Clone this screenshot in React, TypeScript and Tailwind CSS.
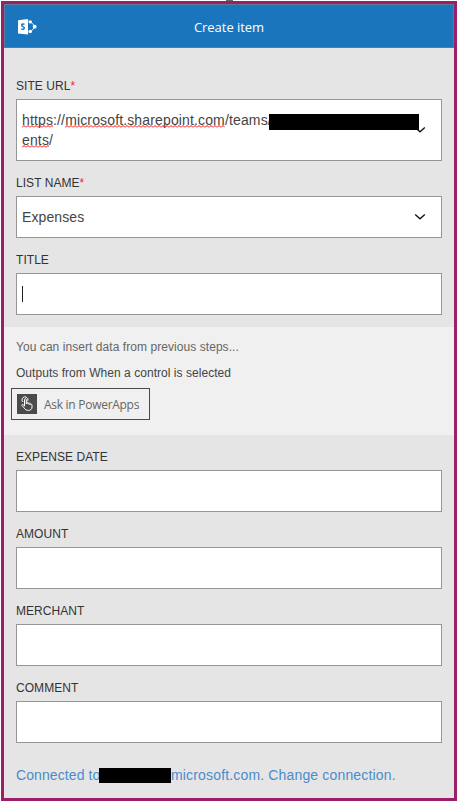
import React from "react";

const sans = "font-['Liberation_Sans',Arial,sans-serif]";
const segoe = "font-['Open_Sans','Noto_Sans',sans-serif]";

function SharePointIcon() {
  return (
    <svg width="21" height="18" viewBox="0 0 21 18" fill="none">
      <path d="M11.5 3.2L13.6 3.6L17.6 8M17.6 9.4L13.6 13.8H11.5" stroke="#fff" strokeWidth="0.9" />
      <path d="M1 2.2L11 0.9V16.6L1 15.4Z" fill="#fff" />
      <circle cx="13.3" cy="3.9" r="1.7" fill="#fff" />
      <circle cx="17.7" cy="8.7" r="1.9" fill="#fff" />
      <circle cx="13.3" cy="13.5" r="1.7" fill="#fff" />
      <path
        d="M7.5 6.4C6.7 5.9 4.7 5.7 4.7 7.2C4.7 8.9 7.3 8.3 7.3 10C7.3 11.6 5.2 11.4 4.3 10.9"
        stroke="#1b75bc"
        strokeWidth="1.5"
      />
    </svg>
  );
}

function TouchIcon() {
  return (
    <svg width="20" height="20" viewBox="0 0 20 20" fill="none" stroke="#fff" strokeWidth="1">
      <path d="M5.9 8A3 3 0 1 1 10.8 6.8" />
      <path d="M7.5 12V5.6C7.5 4.3 9.3 4.3 9.3 5.6V10V8.9C9.3 7.9 11.2 8 11.2 9.1V10.3V9.6C11.2 8.7 13.1 8.9 13.1 9.9V11V10.5C13.1 9.6 15 9.9 15 11.1V13C15 15.4 13.4 16.4 11.4 16.4C9 16.4 8 15.2 7.1 13.9L4.9 11.5C4.5 10.6 5.4 10.1 6.1 10.7L7.5 12" />
    </svg>
  );
}

function Chevron() {
  return (
    <svg className="shrink-0" width="12" height="8" viewBox="0 0 12 8" fill="none" stroke="#111" strokeWidth="1.3">
      <path d="M1.2 1.4L6 5.8L10.8 1.4" />
    </svg>
  );
}

function Misspelled({ id, children }: { id: string; children: string }) {
  return (
    <span className="relative inline-block">
      {children}
      <svg className="absolute top-[15px] left-0 h-[3px] w-full">
        <defs>
          <pattern id={id} width="4" height="3" patternUnits="userSpaceOnUse">
            <path d="M0 2.5L2 0.5L4 2.5" fill="none" stroke="#f00" strokeWidth="1" />
          </pattern>
        </defs>
        <rect width="100%" height="3" fill={`url(#${id})`} />
      </svg>
    </span>
  );
}

function Field({ label, required, children }: { label: string; required?: boolean; children?: React.ReactNode }) {
  return (
    <div className="mx-3">
      <div className="flex h-[35px] items-start pt-[14px] text-[12px] leading-4 tracking-[0.05px] text-[#333]">
        {label}
        {required && <span className="text-[#ff1a2e]">*</span>}
      </div>
      <div className="flex min-h-[42px] items-center border border-[#969696] bg-white pr-[15px] pl-[5px] text-[14px] leading-5 text-[#444]">
        {children}
      </div>
    </div>
  );
}

export default function App() {
  return (
    <div className={`relative h-[801px] w-[457px] bg-white pt-px pl-px ${sans}`}>
      <div className="absolute top-0 left-[226px] h-px w-[7px] bg-[#666]" />
      <div className="h-[800px] border-[3px] border-[#991f66] bg-[#e5e5e5]">
        <header className="relative flex h-11 items-center justify-center border border-[#5c7b9c] bg-[#1b75bc]">
          <div className="absolute top-[13px] left-3">
            <SharePointIcon />
          </div>
          <h1 className={`pt-[2px] text-[13px] leading-5 tracking-[-0.05px] text-white ${segoe}`}>Create item</h1>
        </header>

        <div className="pt-4">
          <Field label="SITE URL" required>
            <div className="h-[60px] flex-1 pt-[10px] tracking-[0.14px]">
              <div className="flex whitespace-nowrap">
                <Misspelled id="squiggle-https">https</Misspelled>
                <span>://</span>
                <Misspelled id="squiggle-host">microsoft.sharepoint.com</Misspelled>
                <span>/teams/</span>
              </div>
              <Misspelled id="squiggle-tail">ents</Misspelled>/
            </div>
            <Chevron />
            <div className="absolute top-[114px] left-[269px] h-4 w-[150px] bg-black" />
          </Field>
          <Field label="LIST NAME" required>
            <span className="flex-1 tracking-[0.1px]">Expenses</span>
            <Chevron />
          </Field>
          <Field label="TITLE">
            <span className="h-4 w-px bg-[#222]" />
          </Field>
        </div>

        <section className="mt-3 h-[108px] bg-[#f0f0f0] pt-3 text-[12px] leading-4">
          <p className="ml-3 tracking-[0.06px] text-[#666]">You can insert data from previous steps...</p>
          <p className="mt-[10px] ml-3 tracking-[0.04px] text-[#444]">Outputs from When a control is selected</p>
          <button className="mt-[7px] ml-[7px] flex h-8 w-[139px] items-center border border-[#4a4a4a] pl-[5px]">
            <span className="h-5 w-5 bg-[#4b4b4b]">
              <TouchIcon />
            </span>
            <span className={`ml-[7px] pt-[2px] text-[12px] tracking-[-0.28px] text-[#666] ${segoe}`}>
              Ask in PowerApps
            </span>
          </button>
        </section>

        <Field label="EXPENSE DATE" />
        <Field label="AMOUNT" />
        <Field label="MERCHANT" />
        <Field label="COMMENT" />

        <div className="mt-[22px] ml-3 flex items-center text-[14px] leading-5 text-[#4a8ccc]">
          <span className="w-[83px] whitespace-nowrap tracking-[0.1px]">Connected to</span>
          <span className="relative h-[15px] w-[72px] bg-black" />
          <span className="tracking-[0.16px]">microsoft.com. Change connection.</span>
        </div>
      </div>
    </div>
  );
}
